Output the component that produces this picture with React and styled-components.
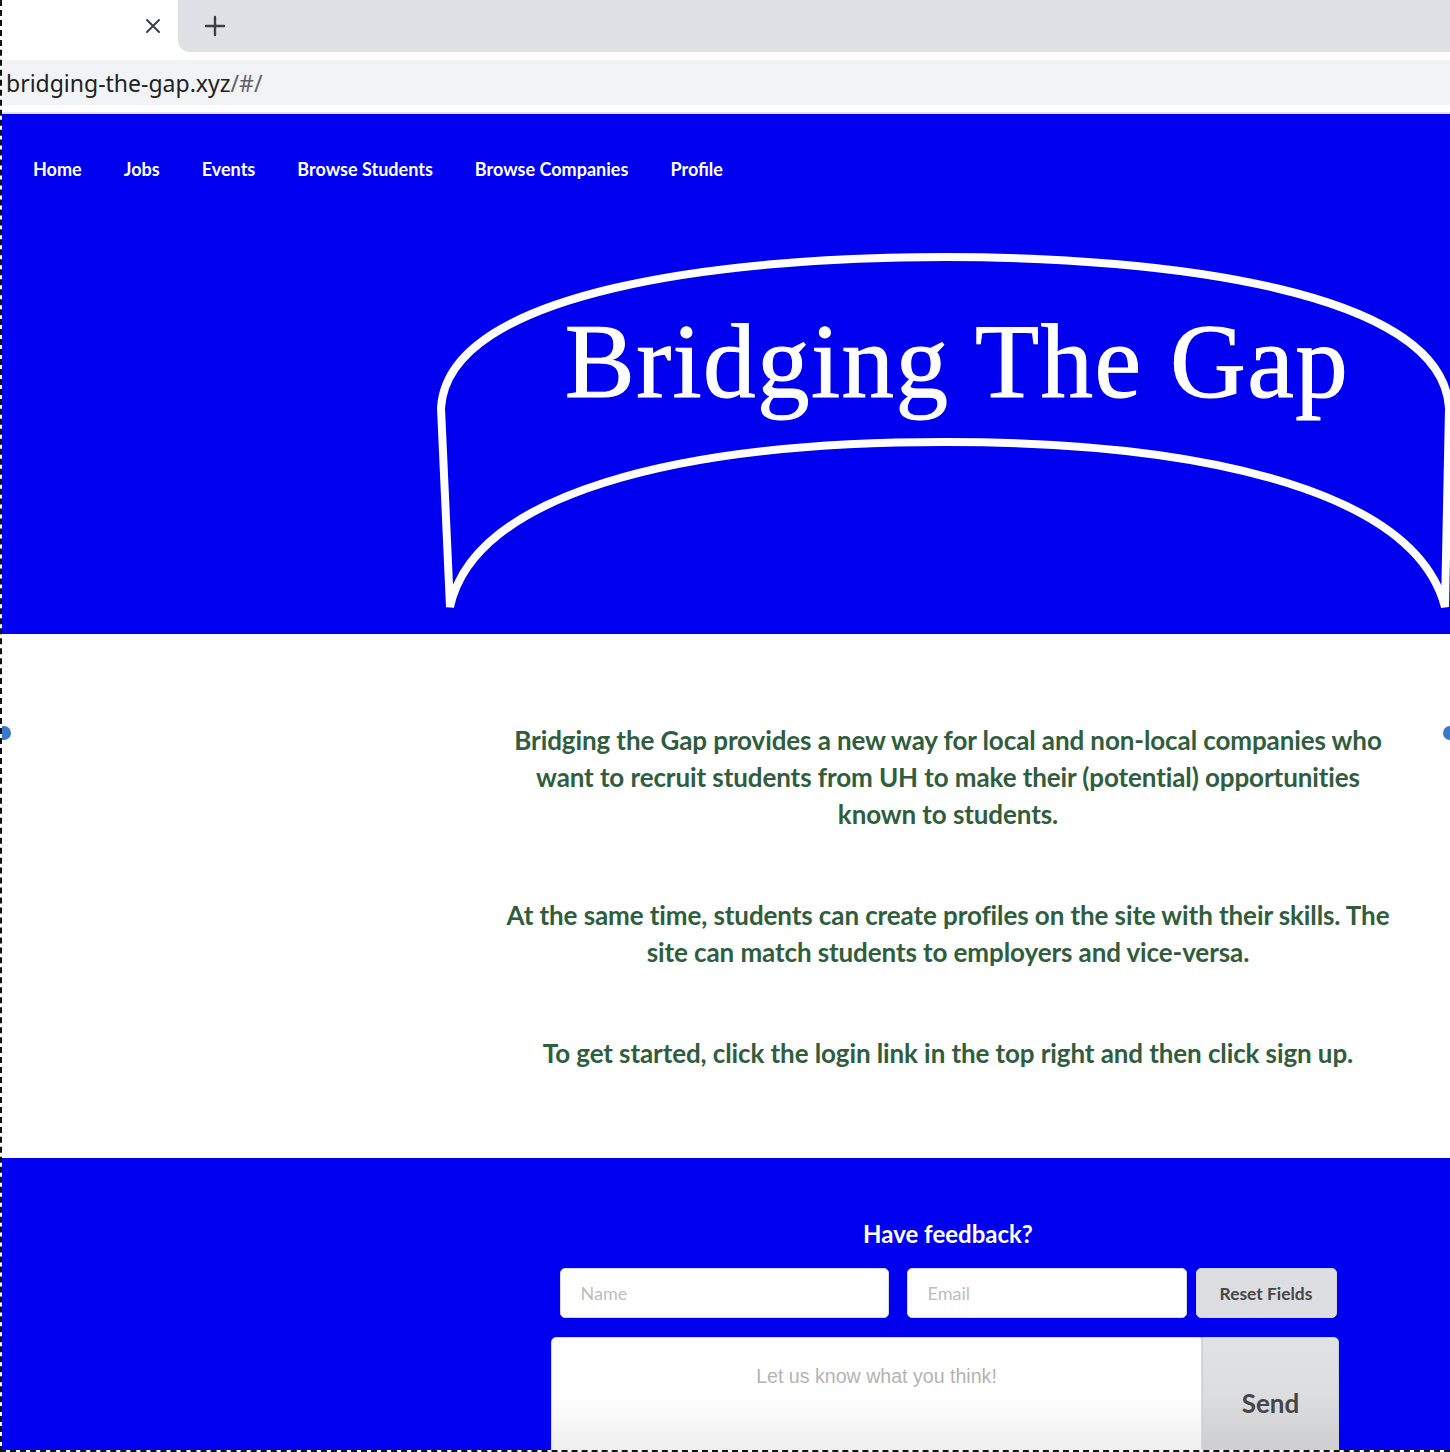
import React from 'react';
import styled, { createGlobalStyle } from 'styled-components';

const BLUE = '#0000f0';

const GlobalStyle = createGlobalStyle`
  html, body {
    margin: 0;
    padding: 0;
    background: #ffffff;
    overflow: hidden;
  }
  * { box-sizing: border-box; }
`

const Frame = styled.div`
  position: relative;
  width: 1450px;
  height: 1452px;
  overflow: hidden;
  border-left: 2px dashed #111;
  border-bottom: 2px dashed #111;
  font-family: 'Lato', 'Noto Sans', sans-serif;
`

const Handle = styled.span`
  position: absolute;
  top: 726px;
  ${p => (p.right ? 'right: -7px;' : 'left: -5px;')}
  width: 14px;
  height: 14px;
  border-radius: 50%;
  background: #3a78c9;
  z-index: 5;
`

/* browser chrome */
const TabStrip = styled.div`
  display: flex;
  height: 52px;
  background: #ffffff;
`
const Tab = styled.div`
  width: 176px;
  display: flex;
  align-items: center;
  justify-content: flex-end;
  padding-right: 17px;
  color: #3c4043;
`
const TabRest = styled.div`
  flex: 1;
  display: flex;
  align-items: center;
  padding-left: 26px;
  background: #dee1e6;
  border-bottom-left-radius: 12px;
  color: #3c4043;
`
const Toolbar = styled.div`
  padding: 8px 0 7px;
  border-bottom: 2px solid #e3e3e3;
`
const AddressBar = styled.div`
  height: 45px;
  display: flex;
  align-items: center;
  padding-left: 4px;
  background: #f1f3f4;
  font-family: 'Noto Sans', 'Roboto', sans-serif;
  font-size: 23px;
  color: #202124;
`
const UrlPath = styled.span`
  color: #5f6368;
`

/* page */
const Header = styled.header`
  height: 520px;
  background: ${BLUE};
  overflow: hidden;
`
const Nav = styled.nav`
  display: flex;
  gap: 42px;
  padding: 44px 0 0 31px;
`
const NavLink = styled.a`
  color: #ffffff;
  font-size: 18.05px;
  font-weight: 700;
  line-height: 22px;
  text-decoration: none;
`
const Column = styled.div`
  margin-left: 444px;
  width: 1004px;
`
const Banner = styled.div`
  position: relative;
  margin: 70px 0 0 -10px;
  width: 1018px;
  height: 365px;
`
const BannerShape = styled.svg`
  position: absolute;
  inset: 0;
`
const Title = styled.h1`
  position: relative;
  margin: 0;
  padding: 59px 0 0 24px;
  text-align: center;
  font-family: 'Liberation Serif', 'Times New Roman', serif;
  font-weight: 400;
  font-size: 105px;
  line-height: 1;
  letter-spacing: 1.4px;
  color: #ffffff;
  -webkit-text-stroke: 1px #ffffff;
`

const About = styled.section`
  padding: 88px 0 86px;
  background: #ffffff;
`
const Copy = styled.div`
  width: 898px;
  margin: 0 auto;
  display: flex;
  flex-direction: column;
  gap: 64px;
`
const Para = styled.p`
  margin: 0;
  text-align: center;
  font-size: 26px;
  font-weight: 700;
  line-height: 37px;
  letter-spacing: -0.1px;
  color: #2f5d3d;
`

const Footer = styled.footer`
  height: 320px;
  padding-top: 61px;
  background: ${BLUE};
`
const FeedbackTitle = styled.h2`
  margin: 0 0 19px;
  text-align: center;
  font-size: 24px;
  font-weight: 700;
  line-height: 30px;
  color: #ffffff;
`
const Row = styled.div`
  display: flex;
  justify-content: center;
  padding-right: ${p => p.shift || 0}px;
  margin-bottom: 19px;
`
const Field = styled.input`
  width: ${p => p.w}px;
  height: 50px;
  margin-right: ${p => p.mr || 0}px;
  padding: 0 20px;
  border: 1px solid #d8d8d8;
  border-radius: 5px;
  background: #ffffff;
  font-family: 'Lato', sans-serif;
  font-size: 18px;
  outline: none;
  &::placeholder { color: #bdbdbd; }
`
const SmallButton = styled.button`
  width: 141px;
  height: 50px;
  border: 1px solid #d2d3d6;
  border-radius: 5px;
  background: #dcdde0;
  font-family: 'Lato', sans-serif;
  font-size: 17.4px;
  font-weight: 700;
  color: #464646;
`
const Message = styled.textarea`
  width: 651px;
  height: 132px;
  padding: 27px 20px 0;
  resize: none;
  border: 1px solid #d8d8d8;
  border-radius: 5px 0 0 5px;
  background: linear-gradient(180deg, #ffffff 0%, #ffffff 45%, #e9e9e9 100%);
  text-align: center;
  font-family: 'Liberation Sans', Arial, sans-serif;
  font-size: 19.6px;
  outline: none;
  &::placeholder { color: #b3b3b3; }
`
const SendButton = styled.button`
  width: 137px;
  height: 132px;
  border: 1px solid #cfd0d3;
  border-radius: 0 5px 5px 0;
  background: linear-gradient(180deg, #e1e2e4 0%, #dcdddf 45%, #c9c9ca 100%);
  font-family: 'Lato', sans-serif;
  font-size: 26px;
  font-weight: 700;
  color: #454545;
`

const CloseIcon = () => (
  <svg width="16" height="16" viewBox="0 0 16 16">
    <path d="M2 2 L14 14 M14 2 L2 14" stroke="currentColor" strokeWidth="2" strokeLinecap="round" />
  </svg>
)

const PlusIcon = () => (
  <svg width="22" height="22" viewBox="0 0 22 22">
    <path d="M11 2 V20 M2 11 H20" stroke="currentColor" strokeWidth="2.4" strokeLinecap="round" />
  </svg>
)

const navItems = ['Home', 'Jobs', 'Events', 'Browse Students', 'Browse Companies', 'Profile'];

const App = () => {
  return (
    <Frame>
      <GlobalStyle />
      <Handle />
      <Handle right />

      <TabStrip>
        <Tab><CloseIcon /></Tab>
        <TabRest><PlusIcon /></TabRest>
      </TabStrip>
      <Toolbar>
        <AddressBar>bridging-the-gap.xyz<UrlPath>/#/</UrlPath></AddressBar>
      </Toolbar>

      <Header>
        <Nav>
          {navItems.map(item => (
            <NavLink key={item} href="#/">{item}</NavLink>
          ))}
        </Nav>
        <Column>
          <Banner>
            <BannerShape width="1018" height="365" viewBox="0 0 1018 365">
              <path
                d="M14 357 L5 158 C 12 40, 290 7, 509 7 C 728 7, 1006 40, 1013 158 L 1009 357 C 980 245, 780 192, 509 192 C 238 192, 38 245, 14 357 Z"
                fill="none"
                stroke="#ffffff"
                strokeWidth="8"
                strokeLinejoin="miter"
              />
            </BannerShape>
            <Title>Bridging The Gap</Title>
          </Banner>
        </Column>
      </Header>

      <About>
        <Column>
          <Copy>
            <Para>
              Bridging the Gap provides a new way for local and non-local companies who
              want to recruit students from UH to make their (potential) opportunities
              known to students.
            </Para>
            <Para>
              At the same time, students can create profiles on the site with their skills. The
              site can match students to employers and vice-versa.
            </Para>
            <Para>
              To get started, click the login link in the top right and then click sign up.
            </Para>
          </Copy>
        </Column>
      </About>

      <Footer>
        <Column>
          <FeedbackTitle>Have feedback?</FeedbackTitle>
          <Row>
            <Field w={329} mr={18} placeholder="Name" />
            <Field w={280} mr={9} placeholder="Email" />
            <SmallButton>Reset Fields</SmallButton>
          </Row>
          <Row shift={6}>
            <Message placeholder="Let us know what you think!" />
            <SendButton>Send</SendButton>
          </Row>
        </Column>
      </Footer>
    </Frame>
  );
};

export default App;
